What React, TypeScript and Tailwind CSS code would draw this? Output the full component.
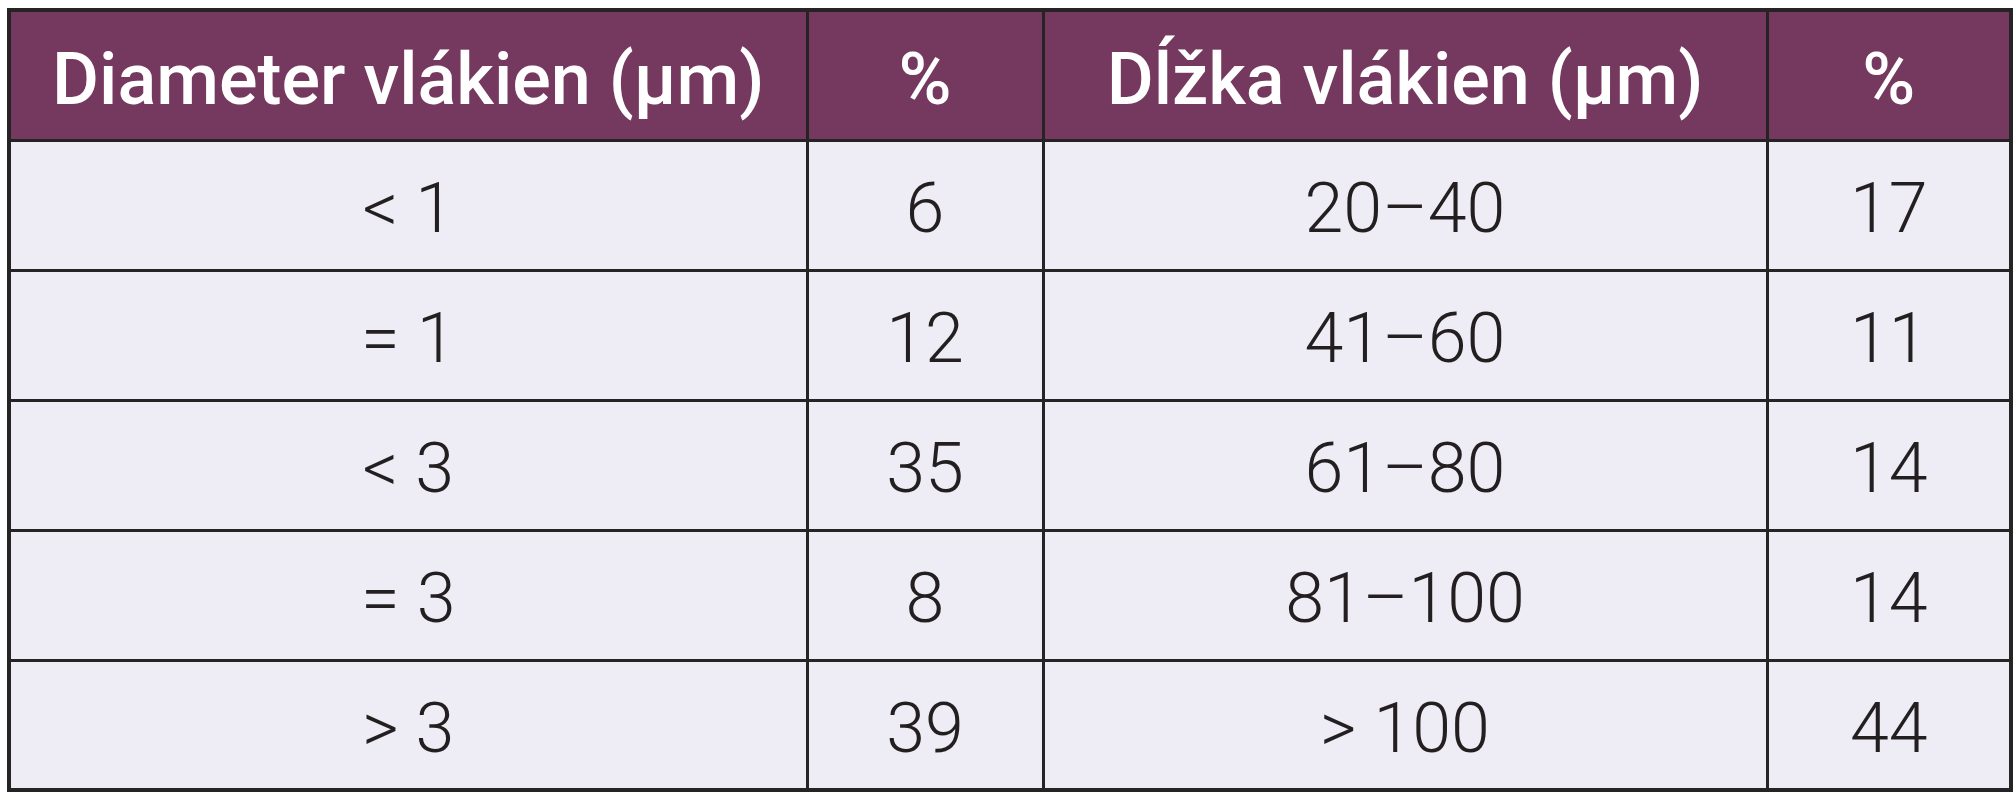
const rows = [
  ["< 1", "6", "20–40", "17"],
  ["= 1", "12", "41–60", "11"],
  ["< 3", "35", "61–80", "14"],
  ["= 3", "8", "81–100", "14"],
  ["> 3", "39", "> 100", "44"],
];

const headers = ["Diameter vlákien (µm)", "%", "Dĺžka vlákien (µm)", "%"];

export default function App() {
  return (
    <div className="min-h-[800px] bg-white pt-[8px] pl-[7px]">
      <table className="w-[2002px] table-fixed border-collapse border-[4px] border-[#262324]">
        <colgroup>
          <col className="w-[798px]" />
          <col className="w-[236px]" />
          <col className="w-[724px]" />
          <col className="w-[244px]" />
        </colgroup>
        <thead>
          <tr className="h-[130px] bg-[#75385e]">
            {headers.map((h, i) => (
              <th
                key={i}
                className="border-[3px] border-[#262324] pt-[10px] text-center align-middle font-['Roboto',sans-serif] text-[72px] font-medium leading-none text-white"
              >
                {h}
              </th>
            ))}
          </tr>
        </thead>
        <tbody>
          {rows.map((r, ri) => (
            <tr key={ri} className="h-[130px] bg-[#eeedf5]">
              {r.map((c, ci) => (
                <td
                  key={ci}
                  className="border-[3px] border-[#262324] pt-[6px] text-center align-middle font-['Roboto',sans-serif] text-[70px] font-light leading-none text-[#231f20]"
                >
                  {c}
                </td>
              ))}
            </tr>
          ))}
        </tbody>
      </table>
    </div>
  );
}
